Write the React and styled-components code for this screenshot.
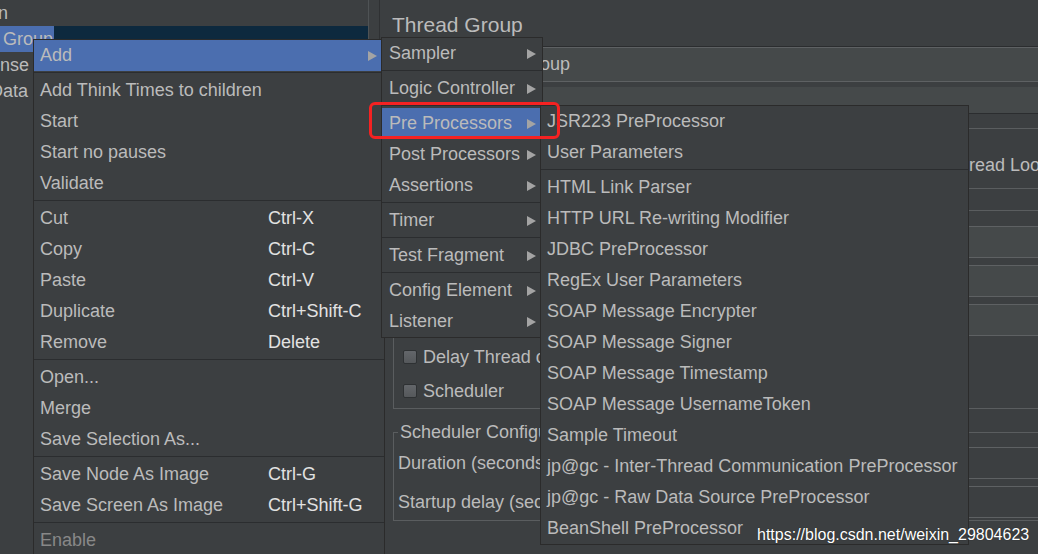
import React from "react";
import styled, { createGlobalStyle } from "styled-components";

const GlobalStyle = createGlobalStyle`
  html, body {
    margin: 0;
    padding: 0;
    background: #3c3f41;
  }
  body {
    font-family: "Liberation Sans", Arial, sans-serif;
  }
`;

const mainItems = [
  { label: "Add", sub: true, active: true },
  "sep",
  { label: "Add Think Times to children" },
  { label: "Start" },
  { label: "Start no pauses" },
  { label: "Validate" },
  "sep",
  { label: "Cut", key: "Ctrl-X" },
  { label: "Copy", key: "Ctrl-C" },
  { label: "Paste", key: "Ctrl-V" },
  { label: "Duplicate", key: "Ctrl+Shift-C" },
  { label: "Remove", key: "Delete" },
  "sep",
  { label: "Open..." },
  { label: "Merge" },
  { label: "Save Selection As..." },
  "sep",
  { label: "Save Node As Image", key: "Ctrl-G" },
  { label: "Save Screen As Image", key: "Ctrl+Shift-G" },
  "sep",
  { label: "Enable", disabled: true },
  { label: "Disable" },
];

const addItems = [
  { label: "Sampler", sub: true },
  "sep",
  { label: "Logic Controller", sub: true },
  "sep",
  { label: "Pre Processors", sub: true, active: true },
  { label: "Post Processors", sub: true },
  { label: "Assertions", sub: true },
  "sep",
  { label: "Timer", sub: true },
  "sep",
  { label: "Test Fragment", sub: true },
  "sep",
  { label: "Config Element", sub: true },
  { label: "Listener", sub: true },
];

const preItems = [
  { label: "JSR223 PreProcessor" },
  { label: "User Parameters" },
  "sep",
  { label: "HTML Link Parser" },
  { label: "HTTP URL Re-writing Modifier" },
  { label: "JDBC PreProcessor" },
  { label: "RegEx User Parameters" },
  { label: "SOAP Message Encrypter" },
  { label: "SOAP Message Signer" },
  { label: "SOAP Message Timestamp" },
  { label: "SOAP Message UsernameToken" },
  { label: "Sample Timeout" },
  { label: "jp@gc - Inter-Thread Communication PreProcessor" },
  { label: "jp@gc - Raw Data Source PreProcessor" },
  { label: "BeanShell PreProcessor" },
];

const treeRows = [
  { label: "Test Plan", shift: -66 },
  { label: "Thread Group", shift: -60, selected: true },
  { label: "Response", shift: -52 },
  { label: "Data", shift: -10 },
];

const Menu = ({ items, left, top, width, padL, padR }) => (
  <MenuPanel $left={left} $top={top} $width={width}>
    {items.map((it, i) =>
      it === "sep" ? (
        <Separator key={i} />
      ) : (
        <Item key={i} $active={it.active} $disabled={it.disabled} $pl={padL} $pr={padR}>
          <ItemLabel>{it.label}</ItemLabel>
          {it.key && <Shortcut>{it.key}</Shortcut>}
          {it.sub && <Arrow />}
        </Item>
      )
    )}
  </MenuPanel>
);

export default function App() {
  return (
    <>
      <GlobalStyle />
      <Screen>
        <TreePane>
          {treeRows.map((r, i) => (
            <TreeRow key={i} $selected={r.selected}>
              <TreeLabel $shift={r.shift} $selected={r.selected}>
                {r.label}
              </TreeLabel>
            </TreeRow>
          ))}
        </TreePane>
        <Splitter />
        <RightPane>
          <Content>
            <Title>Thread Group</Title>
            <NameRow>
              <RowLabel>Name:</RowLabel>
              <TextField>Thread Group</TextField>
            </NameRow>
            <CommentsRow>
              <RowLabel>Comments:</RowLabel>
              <TextArea />
            </CommentsRow>

            <Fieldset $mt={14} $pt={22} $pb={9}>
              <RadioRow>
                <span>Action to be taken after a Sampler error</span>
                <RadioItem>
                  <Radio $checked />
                  Continue
                </RadioItem>
                <RadioItem>
                  <Radio />
                  Start Next Thread Loop
                </RadioItem>
                <RadioItem>
                  <Radio />
                  Stop Thread
                </RadioItem>
                <RadioItem>
                  <Radio />
                  Stop Test
                </RadioItem>
              </RadioRow>
            </Fieldset>

            <Fieldset $mt={11} $pt={6} $pb={0}>
              <Legend>Thread Properties</Legend>
              <FormRow>
                <FieldLabel>Number of Threads (users):</FieldLabel>
                <Field>1</Field>
              </FormRow>
              <FormRow>
                <FieldLabel>Ramp-up period (seconds):</FieldLabel>
                <Field>1</Field>
              </FormRow>
              <FormRow>
                <FieldLabel>Loop Count:</FieldLabel>
                <Field>1</Field>
              </FormRow>
              <CheckRow $first>
                <Checkbox />
                Delay Thread creation until needed
              </CheckRow>
              <CheckRow>
                <Checkbox />
                Scheduler
              </CheckRow>
            </Fieldset>

            <Fieldset $mt={13} $pt={5} $pb={2}>
              <Legend>Scheduler Configuration</Legend>
              <FormRow>
                <FieldLabel>Duration (seconds)</FieldLabel>
                <Field $disabled />
              </FormRow>
              <FormRow>
                <FieldLabel>Startup delay (seconds)</FieldLabel>
                <Field $disabled />
              </FormRow>
            </Fieldset>
          </Content>
        </RightPane>

        <Menu items={mainItems} left={33} top={39} width={352} padL={6} padR={7} />
        <Menu items={addItems} left={381} top={37} width={162} padL={7} padR={6} />
        <Menu items={preItems} left={540} top={105} width={429} padL={6} padR={6} />
        <Marker />
        <Watermark>https://blog.csdn.net/weixin_29804623</Watermark>
      </Screen>
    </>
  );
}

const Screen = styled.div`
  position: relative;
  display: flex;
  width: 1038px;
  height: 554px;
  overflow: hidden;
  background: #3c3f41;
  color: #bbbbbb;
  font-family: "Liberation Sans", Arial, sans-serif;
  font-size: 18px;
`;

const TreePane = styled.div`
  width: 368px;
  flex-shrink: 0;
  display: flex;
  flex-direction: column;
  overflow: hidden;
`;

const TreeRow = styled.div`
  height: 26px;
  display: flex;
  align-items: center;
  white-space: nowrap;
  background: ${(p) => (p.$selected ? "#0d293e" : "transparent")};
`;

const TreeLabel = styled.span`
  margin-left: ${(p) => p.$shift}px;
  padding: 0 ${(p) => (p.$selected ? "1px" : "0")};
  line-height: 26px;
  background: ${(p) => (p.$selected ? "#4b6eaf" : "transparent")};
`;

const Splitter = styled.div`
  width: 12px;
  flex-shrink: 0;
  box-sizing: border-box;
  border-left: 1px solid #4f5355;
  border-right: 1px solid #2f3133;
`;

const RightPane = styled.div`
  flex: 1;
  overflow: hidden;
`;

const Content = styled.div`
  width: 760px;
  padding-left: 12px;
  display: flex;
  flex-direction: column;
`;

const Title = styled.div`
  height: 46px;
  box-sizing: border-box;
  padding-top: 4px;
  display: flex;
  align-items: center;
  font-size: 21px;
`;

const NameRow = styled.div`
  display: flex;
  height: 36px;
  box-sizing: border-box;
  border-top: 1px solid #2b2d2f;
`;

const RowLabel = styled.div`
  width: 62px;
  flex-shrink: 0;
  display: flex;
  align-items: center;
`;

const TextField = styled.div`
  flex: 1;
  display: flex;
  align-items: center;
  padding-left: 4px;
  background: #45494a;
  border-top: 1px solid #5e6163;
  border-bottom: 1px solid #5e6163;
`;

const CommentsRow = styled.div`
  display: flex;
  height: 27px;
  margin-top: 5px;
  box-sizing: border-box;
  border-bottom: 1px solid #2b2d2f;
`;

const TextArea = styled.div`
  flex: 1;
  background: #45494a;
`;

const Fieldset = styled.fieldset`
  margin: ${(p) => p.$mt}px 0 0 1px;
  padding: ${(p) => p.$pt}px 6px ${(p) => p.$pb}px 4px;
  min-width: 0;
  border: 1px solid #5a5d5f;
`;

const Legend = styled.legend`
  padding: 0 2px;
  line-height: 20px;
  font-size: 18px;
`;

const RadioRow = styled.div`
  height: 28px;
  display: flex;
  align-items: center;
  gap: 18px;
  padding-left: 2px;
  white-space: nowrap;
`;

const RadioItem = styled.span`
  display: flex;
  align-items: center;
  gap: 6px;
`;

const Radio = styled.span`
  width: 14px;
  height: 14px;
  box-sizing: border-box;
  border-radius: 50%;
  border: 1px solid #2e3133;
  background: ${(p) =>
    p.$checked
      ? "radial-gradient(circle, #c0c0c0 0 3px, #5b5e60 3.5px)"
      : "#5b5e60"};
`;

const FormRow = styled.div`
  display: flex;
  height: 32px;
  & + & {
    margin-top: 7px;
  }
`;

const FieldLabel = styled.div`
  display: flex;
  align-items: center;
  white-space: nowrap;
  margin-right: 10px;
`;

const Field = styled.div`
  flex: 1;
  display: flex;
  align-items: center;
  padding-left: 4px;
  background: ${(p) => (p.$disabled ? "#3c3f41" : "#45494a")};
  border-top: 1px solid #5e6163;
  border-bottom: 1px solid #5e6163;
  border-left: 1px solid #5e6163;
`;

const CheckRow = styled.div`
  height: 34px;
  margin-top: ${(p) => (p.$first ? "4px" : "0")};
  display: flex;
  align-items: center;
  gap: 6px;
  padding-left: 5px;
  white-space: nowrap;
`;

const Checkbox = styled.span`
  width: 14px;
  height: 14px;
  box-sizing: border-box;
  border: 1px solid #2e3133;
  border-radius: 2px;
  background: linear-gradient(#63666a, #55585b);
`;

const MenuPanel = styled.div`
  position: absolute;
  left: ${(p) => p.$left}px;
  top: ${(p) => p.$top}px;
  width: ${(p) => p.$width}px;
  box-sizing: border-box;
  background: #3c3f41;
  border: 1px solid #2b2b2b;
`;

const Item = styled.div`
  display: flex;
  align-items: center;
  height: 31px;
  padding: 0 ${(p) => p.$pr}px 0 ${(p) => p.$pl}px;
  white-space: nowrap;
  background: ${(p) => (p.$active ? "#4b6eaf" : "transparent")};
  color: ${(p) => (p.$disabled ? "#888888" : "#bbbbbb")};
`;

const ItemLabel = styled.span`
  flex: 1;
`;

const Shortcut = styled.span`
  width: 109px;
  color: #e2e2e2;
`;

const Arrow = styled.span`
  width: 0;
  height: 0;
  border-top: 5px solid transparent;
  border-bottom: 5px solid transparent;
  border-left: 9px solid #a4a4a4;
`;

const Separator = styled.div`
  height: 1px;
  margin: 1px 0 2px;
  background: #2b2d2f;
`;

const Marker = styled.div`
  position: absolute;
  left: 369px;
  top: 102px;
  width: 191px;
  height: 37px;
  box-sizing: border-box;
  border: 3px solid #f52222;
  border-radius: 6px;
`;

const Watermark = styled.div`
  position: absolute;
  left: 757px;
  top: 525px;
  font-size: 16px;
  line-height: 19px;
  color: #ffffff;
  text-shadow: 0 0 1px rgba(0, 0, 0, 0.6);
  white-space: nowrap;
`;
